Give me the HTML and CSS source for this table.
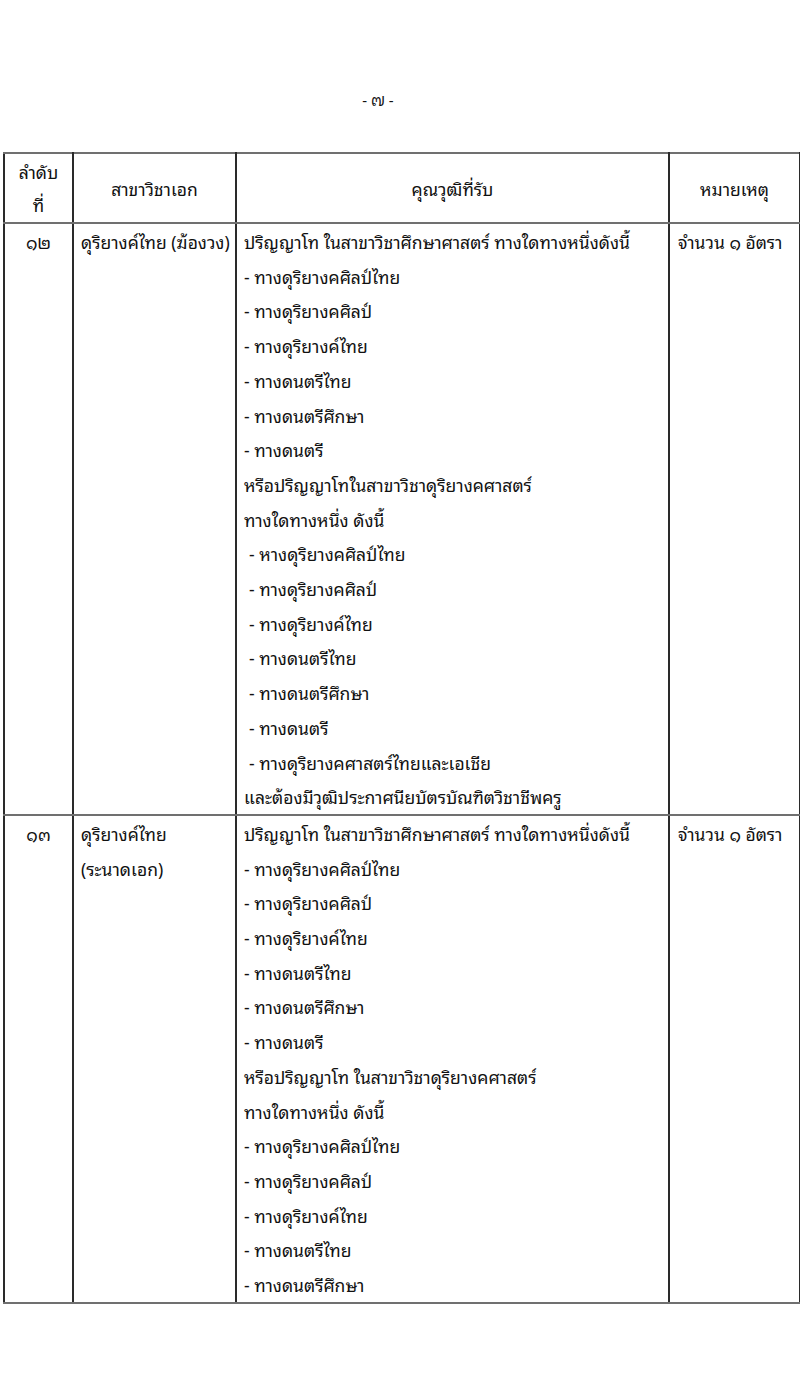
FILE: index.html
```html
<!DOCTYPE html>
<html lang="th">
<head>
<meta charset="utf-8">
<link rel="stylesheet" href="styles.css">
</head>
<body>
<div class="page">
  <div class="pageno">- ๗ -</div>
  <table class="grid">
    <colgroup>
      <col class="c1"><col class="c2"><col class="c3"><col class="c4">
    </colgroup>
    <thead>
      <tr>
        <th class="h1">ลำดับ<br>ที่</th>
        <th>สาขาวิชาเอก</th>
        <th>คุณวุฒิที่รับ</th>
        <th>หมายเหตุ</th>
      </tr>
    </thead>
    <tbody>
      <tr class="r12">
        <td class="num">๑๒</td>
        <td class="major">ดุริยางค์ไทย (ฆ้องวง)</td>
        <td class="qual">
          <div>ปริญญาโท ในสาขาวิชาศึกษาศาสตร์ ทางใดทางหนึ่งดังนี้</div>
          <div>- ทางดุริยางคศิลป์ไทย</div>
          <div>- ทางดุริยางคศิลป์</div>
          <div>- ทางดุริยางค์ไทย</div>
          <div>- ทางดนตรีไทย</div>
          <div>- ทางดนตรีศึกษา</div>
          <div>- ทางดนตรี</div>
          <div>หรือปริญญาโทในสาขาวิชาดุริยางคศาสตร์</div>
          <div>ทางใดทางหนึ่ง ดังนี้</div>
          <div class="ind">- หางดุริยางคศิลป์ไทย</div>
          <div class="ind">- ทางดุริยางคศิลป์</div>
          <div class="ind">- ทางดุริยางค์ไทย</div>
          <div class="ind">- ทางดนตรีไทย</div>
          <div class="ind">- ทางดนตรีศึกษา</div>
          <div class="ind">- ทางดนตรี</div>
          <div class="ind">- ทางดุริยางคศาสตร์ไทยและเอเชีย</div>
          <div>และต้องมีวุฒิประกาศนียบัตรบัณฑิตวิชาชีพครู</div>
        </td>
        <td class="note">จำนวน ๑ อัตรา</td>
      </tr>
      <tr class="r13">
        <td class="num">๑๓</td>
        <td class="major"><div>ดุริยางค์ไทย</div><div>(ระนาดเอก)</div></td>
        <td class="qual">
          <div>ปริญญาโท ในสาขาวิชาศึกษาศาสตร์ ทางใดทางหนึ่งดังนี้</div>
          <div>- ทางดุริยางคศิลป์ไทย</div>
          <div>- ทางดุริยางคศิลป์</div>
          <div>- ทางดุริยางค์ไทย</div>
          <div>- ทางดนตรีไทย</div>
          <div>- ทางดนตรีศึกษา</div>
          <div>- ทางดนตรี</div>
          <div>หรือปริญญาโท ในสาขาวิชาดุริยางคศาสตร์</div>
          <div>ทางใดทางหนึ่ง ดังนี้</div>
          <div>- ทางดุริยางคศิลป์ไทย</div>
          <div>- ทางดุริยางคศิลป์</div>
          <div>- ทางดุริยางค์ไทย</div>
          <div>- ทางดนตรีไทย</div>
          <div>- ทางดนตรีศึกษา</div>
        </td>
        <td class="note">จำนวน ๑ อัตรา</td>
      </tr>
    </tbody>
  </table>
</div>
</body>
</html>
```
FILE: styles.css
```css
html, body {
  margin: 0;
  padding: 0;
  background: #ffffff;
}
body {
  font-family: "Noto Sans Thai Looped", "Noto Serif Thai", "Loma", "Garuda", "Noto Sans Thai", "Noto Sans", "DejaVu Sans", sans-serif;
  font-size: 17.5px;
  color: #111111;
}
.page {
  width: 800px;
  height: 1394px;
  padding-top: 87px;
  box-sizing: border-box;
}
.pageno {
  text-align: center;
  padding-right: 44px;
  height: 65px;
  line-height: 24px;
  font-size: 15px;
}
.grid {
  margin-left: 3px;
  width: 796px;
  border-collapse: collapse;
  table-layout: fixed;
}
.c1 { width: 69px; }
.c2 { width: 163px; }
.c3 { width: 433px; }
.c4 { width: 131px; }
.grid th, .grid td {
  border-left: 2px solid #2a2a2a;
  border-right: 2px solid #2a2a2a;
  border-top: 2px solid #707070;
  border-bottom: 2px solid #707070;
  vertical-align: top;
  padding: 0;
}
.grid th {
  height: 68px;
  vertical-align: middle;
  font-weight: normal;
  text-align: center;
  line-height: 33px;
}
.grid td {
  line-height: 34.7px;
}
.num {
  text-align: center;
}
.major {
  padding-left: 7px !important;
}
.qual {
  padding-left: 7px !important;
}
.qual .ind {
  padding-left: 5px;
}
.note {
  padding-left: 8px !important;
}
```
